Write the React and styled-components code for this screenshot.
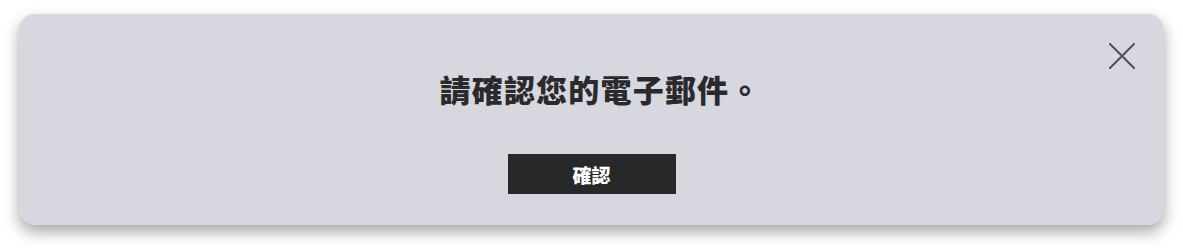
import React from "react";
import styled, { createGlobalStyle } from "styled-components";

const Global = createGlobalStyle`
  html, body { margin: 0; padding: 0; background: #ffffff; }
  body { font-family: "Noto Sans CJK TC", "Noto Sans", sans-serif; }
`;

const Page = styled.div`
  padding: 14px 19px 25px;
`;

const Card = styled.div`
  position: relative;
  background: #d7d7df;
  border-radius: 16px;
  box-shadow: 0 7px 15px rgba(0, 0, 0, 0.35);
  height: 211px;
  box-sizing: border-box;
  padding-top: 51px;
  display: flex;
  flex-direction: column;
  align-items: center;
`;

const Title = styled.h2`
  margin: 0;
  padding-left: 18px;
  font-family: "Noto Sans CJK TC", sans-serif;
  font-weight: 900;
  font-size: 31px;
  line-height: 48px;
  color: #2a2a2d;
  letter-spacing: 1.2px;
`;

const ConfirmButton = styled.button`
  margin-top: 41px;
  width: 168px;
  height: 40px;
  border: none;
  background: #28282b;
  color: #ffffff;
  font-family: "Noto Sans CJK TC", sans-serif;
  font-weight: 900;
  font-size: 19px;
  cursor: pointer;
  padding: 0;
`;

const Close = styled.button`
  position: absolute;
  top: 29px;
  right: 29px;
  width: 26px;
  height: 26px;
  padding: 0;
  border: none;
  background: transparent;
  display: flex;
  align-items: center;
  justify-content: center;
  cursor: pointer;
`;

export default function App() {
  return (
    <>
      <Global />
      <Page>
        <Card>
          <Close aria-label="close">
            <svg width="26" height="26" viewBox="0 0 26 26" fill="none">
              <path d="M1 1 L25 25 M25 1 L1 25" stroke="#505055" strokeWidth="2" strokeLinecap="round" />
            </svg>
          </Close>
          <Title>請確認您的電子郵件。</Title>
          <ConfirmButton>確認</ConfirmButton>
        </Card>
      </Page>
    </>
  );
}
